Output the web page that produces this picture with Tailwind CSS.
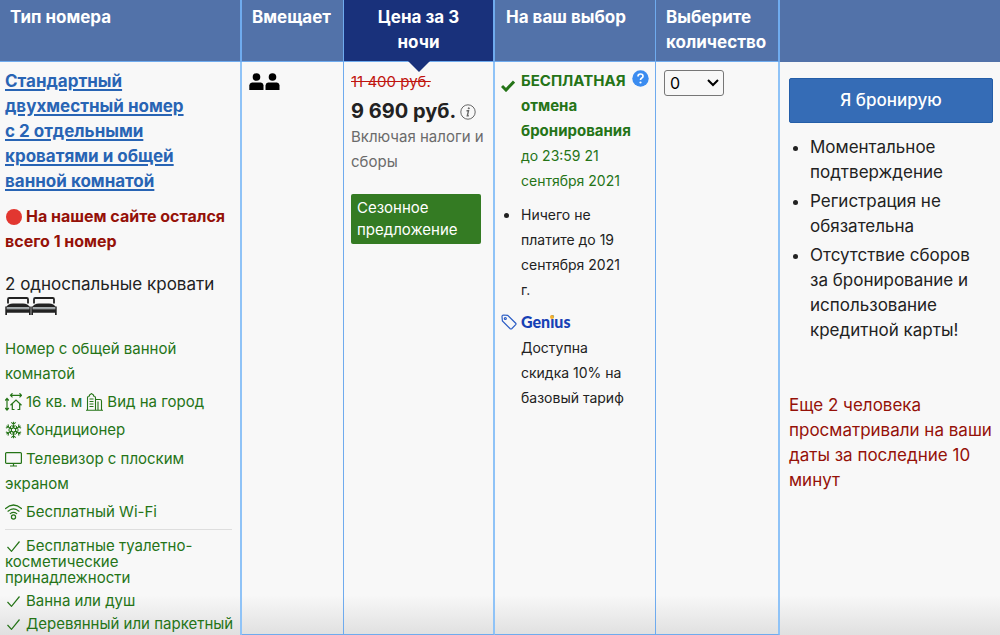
<!DOCTYPE html>
<html lang="ru">
<head>
<meta charset="utf-8">
<title>Выбор номера</title>
<script src="https://cdn.jsdelivr.net/npm/@tailwindcss/browser@4"></script>
</head>
<body class="bg-[#f8f8f8] font-['Inter',sans-serif] text-[#222]">
<div class="h-screen overflow-hidden bg-[linear-gradient(to_top,#e0e0e0,#f8f8f8_40px)]">
<table class="h-full w-full table-fixed border-separate border-spacing-0">
  <colgroup>
    <col class="w-[24.2%]"><col class="w-[10.2%]"><col class="w-[15.1%]"><col class="w-[16.1%]"><col class="w-[12.4%]"><col class="w-[22%]">
  </colgroup>
  <thead>
    <tr class="h-[62px] bg-[#5272a9] text-left align-top text-[17px] leading-[25px] text-white">
      <th class="border-r-2 border-b border-[#6fabee] pt-[5px] pl-[10px] font-bold">Тип номера</th>
      <th class="border-r border-b border-[#6fabee] pt-[5px] pl-[10px] font-bold">Вмещает</th>
      <th class="relative border-r-2 border-b border-[#6fabee] bg-[#19317b] px-6 pt-[5px] text-center font-bold">Цена за 3 ночи
        <svg class="absolute top-full left-1/2 -ml-[11px]" width="22" height="11" viewBox="0 0 22 11"><path d="M0 0h22L11 11z" fill="#19317b"/></svg>
      </th>
      <th class="border-r border-b border-[#6fabee] pt-[5px] pl-[11px] font-bold">На ваш выбор</th>
      <th class="border-r-2 border-b border-[#6fabee] pt-[5px] pl-[10px] font-bold">Выберите количество</th>
      <th class="pt-[5px]"></th>
    </tr>
  </thead>
  <tbody>
    <tr class="align-top">
      <td class="border-r-2 border-[#8fc3f7] pt-[7px] pr-2 pl-[5px]">
        <a href="#" class="block text-[17px] leading-[25px] font-bold whitespace-nowrap text-[#2864b4] underline decoration-2 underline-offset-2">Стандартный<br>двухместный номер<br>с 2 отдельными<br>кроватями и общей<br>ванной комнатой</a>
        <p class="mt-[10px] text-base leading-[25px] font-bold whitespace-nowrap text-[#951108]"><span class="mr-1 ml-px inline-block size-4 rounded-full bg-[#e23730] align-[-3px]"></span>На нашем сайте остался<br>всего 1 номер</p>
        <p class="mt-[18px] text-[17px] leading-[25px] whitespace-nowrap">2 односпальные кровати</p>
        <div class="flex h-[18px]">
          <svg width="26" height="18" viewBox="0 0 26 18"><path d="M3 6.500V2.200Q3 1 4.200 1h17.600Q23 1 23 2.200v4.300" fill="none" stroke="#222" stroke-width="1.800"/><path d="M1 10.300Q3 6.500 8 6.500h10q5 0 7 3.800z" fill="#222"/><path d="M1.500 10.300h23v2h-23z" fill="#9ba2a5"/><path d="M.3 9.500h1.400v2.800h22.600V9.500h1.400V18H24v-2.300H2V18H.3z" fill="#222"/></svg>
          <svg width="26" height="18" viewBox="0 0 26 18"><path d="M3 6.500V2.200Q3 1 4.200 1h17.600Q23 1 23 2.200v4.300" fill="none" stroke="#222" stroke-width="1.800"/><path d="M1 10.300Q3 6.500 8 6.500h10q5 0 7 3.800z" fill="#222"/><path d="M1.500 10.300h23v2h-23z" fill="#9ba2a5"/><path d="M.3 9.500h1.400v2.800h22.600V9.500h1.400V18H24v-2.300H2V18H.3z" fill="#222"/></svg>
        </div>
        <div class="mt-[21px] text-[15px] leading-[25px] whitespace-nowrap text-[#257417]">
          <p>Номер с общей ванной<br>комнатой</p>
          <p class="mt-[3px] flex items-center gap-1">
            <svg width="17" height="18" viewBox="0 0 17 18" fill="none" stroke="#257417" stroke-width="1.200"><path d="M5.500 2.300h11M7.500.3l-2 2 2 2M14.500.3l2 2-2 2M2 5.500v11.500M.2 7.500L2 5.500l1.800 2M.2 15L2 17l1.800-2M5.500 12.200L11 7l5.500 5.200M7.300 11v5.500h2.200M14.700 11v5.500h-2.200"/></svg>
            <span>16 кв. м</span>
            <svg width="17" height="18" viewBox="0 0 17 18" fill="none" stroke="#257417" stroke-width="1.100"><path d="M1.500 17V5Q1.500 3 3.500 3V2L5.500.6l2 1.400v1q2 0 2 2v12M12 17V8.500M9.500 6.500h4.500q1.500 0 1.500 1.500v9M0 17.300h17M3.500 6h4M3.500 8.500h4M3.500 11h4M3.500 13.500h4"/></svg>
            <span>Вид на город</span>
          </p>
          <p class="mt-[3px] flex items-center gap-1">
            <svg width="17" height="18" viewBox="-9 -9 18 18" fill="none" stroke="#257417" stroke-width="1.100"><path id="arm" d="M0-2.500v-6.200M-2.300-8L0-6 2.300-8M-2.200-1.300L0-2.500 2.200-1.300M-2.200-4.800L0-3.600 2.200-4.800"/><use href="#arm" transform="rotate(60)"/><use href="#arm" transform="rotate(120)"/><use href="#arm" transform="rotate(180)"/><use href="#arm" transform="rotate(240)"/><use href="#arm" transform="rotate(300)"/></svg>
            <span>Кондиционер</span>
          </p>
          <p class="mt-1"><svg class="mr-1 inline-block align-[-3px]" width="17" height="16" viewBox="0 0 17 16" fill="none" stroke="#257417" stroke-width="1.200"><rect x=".6" y="1.600" width="15.800" height="10.800" rx="1"/><path d="M8.500 12.500V15M5 15h7"/></svg>Телевизор с плоским<br>экраном</p>
          <p class="mt-[3px] flex items-center gap-1">
            <svg width="17" height="16" viewBox="0 0 17 16" fill="none" stroke="#257417" stroke-width="1.200" stroke-linecap="round"><path d="M.6 4.500Q8.500-2.500 16.400 4.500M3 7.200q5.500-4.800 11 0M5.300 9.600q3.200-2.600 6.400 0"/><circle cx="8.500" cy="13" r="2.100"/></svg>
            <span>Бесплатный Wi-Fi</span>
          </p>
          <div class="mt-[5px] border-t border-[#dedede]"></div>
          <ul class="mt-2 leading-4">
            <li><svg class="mr-[6px] ml-[2px] inline-block" width="13" height="11" viewBox="0 0 13 11" fill="none" stroke="#257417" stroke-width="1.200"><path d="M.5 6l4 4.300L12.500.5"/></svg>Бесплатные туалетно-<br>косметические<br>принадлежности</li>
            <li class="mt-[7px]"><svg class="mr-[6px] ml-[2px] inline-block" width="13" height="11" viewBox="0 0 13 11" fill="none" stroke="#257417" stroke-width="1.200"><path d="M.5 6l4 4.300L12.500.5"/></svg>Ванна или душ</li>
            <li class="mt-[7px]"><svg class="mr-[6px] ml-[2px] inline-block" width="13" height="11" viewBox="0 0 13 11" fill="none" stroke="#257417" stroke-width="1.200"><path d="M.5 6l4 4.300L12.500.5"/></svg>Деревянный или паркетный</li>
          </ul>
        </div>
      </td>
      <td class="border-r border-b border-[#6fabee] pt-[11px] pl-[7px]">
        <svg width="31" height="17" viewBox="0 0 31 17" role="img" aria-label="2 гостя"><circle cx="7.500" cy="4" r="3.800"/><path d="M.3 17v-4.500Q.3 10 3 9.500h9q2.500.5 2.500 3V17z"/><circle cx="23.500" cy="4" r="3.800"/><path d="M16.500 17v-4.500q0-2.500 2.500-3h9q2.500.5 2.500 3V17z"/></svg>
      </td>
      <td class="border-r-2 border-b border-r-[#8fc3f7] border-b-[#6fabee] pt-[7px] pr-3 pl-[7px]">
        <p class="text-[15px] leading-[25px] text-[#c0150f] line-through">11 400 руб.</p>
        <p class="mt-[5px] flex items-center gap-1 text-xl leading-[25px] font-bold whitespace-nowrap">9 690 руб.
          <svg width="16" height="16" viewBox="0 0 16 16" fill="none" stroke="#666"><circle cx="8" cy="8" r="7.200"/><path d="M6.500 6.800h2l-1.200 5h1.500" stroke-width="1.400"/><circle cx="8.800" cy="4.300" r=".6" fill="#666"/></svg>
        </p>
        <p class="text-[15px] leading-[25px] whitespace-nowrap text-[#6b6b6b]">Включая налоги и<br>сборы</p>
        <p class="mt-5 rounded-[2px] bg-[#347b23] px-[6px] py-[3px] text-[15px] leading-[22px] text-white">Сезонное<br>предложение</p>
      </td>
      <td class="border-r border-b border-[#6fabee] px-[6px] pt-[6px] text-sm leading-[25px]">
        <div class="flex text-[#257417]">
          <svg class="mt-3 mr-[6px] shrink-0" width="14" height="12" viewBox="0 0 14 12" fill="none" stroke="#257417" stroke-width="3"><path d="M1 6l4 4L13 1.500"/></svg>
          <p class="whitespace-nowrap"><b class="text-[15px]">БЕСПЛАТНАЯ<br>отмена<br>бронирования</b><br>до 23:59 21<br>сентября 2021</p>
          <svg class="mt-[2px] ml-auto shrink-0" width="17" height="17" viewBox="0 0 17 17"><circle cx="8.500" cy="8.500" r="8.200" fill="#3b8cf0"/><path d="M6 6.500q0-2.500 2.500-2.500T11 6.200q0 1.200-1.300 1.900-1.200.7-1.200 2" fill="none" stroke="#fff" stroke-width="1.700"/><circle cx="8.500" cy="12.500" r="1.100" fill="#fff"/></svg>
        </div>
        <ul class="mt-[9px] list-disc pl-[19px]"><li class="pl-px">Ничего не<br>платите до 19<br>сентября 2021<br>г.</li></ul>
        <div class="mt-[10px] flex items-center gap-1 font-['Lato',sans-serif] text-base font-black text-[#1741b5]">
          <svg width="16" height="16" viewBox="0 0 16 16" fill="none" stroke="#2a5cc4" stroke-width="1.200"><path d="M1 2.500Q1 1 2.500 1l4.200.4 8 7.800q.6.800 0 1.500l-4 4q-.8.600-1.500 0L1.400 7z"/><circle cx="4.300" cy="4.500" r="1"/></svg>
          <span class="leading-[19px]">Gen<span class="relative inline-block">i<span class="absolute top-[3px] left-0 size-1 rounded-full bg-[#f5b12b]"></span></span>us</span>
        </div>
        <p class="mt-1 pl-5">Доступна<br>скидка 10% на<br>базовый тариф</p>
      </td>
      <td class="border-r-2 border-b border-r-[#8fc3f7] border-b-[#6fabee] pt-2 pl-2">
        <div class="relative w-[60px]">
          <select aria-label="Количество номеров" class="h-[26px] w-full appearance-none rounded-[3px] border border-[#777] bg-[#f8f8f8] pl-[5px] text-base leading-6 text-black"><option>0</option><option>1</option></select>
          <svg class="pointer-events-none absolute top-[9px] right-[5px]" width="12" height="8" viewBox="0 0 12 8" fill="none" stroke="#000" stroke-width="2"><path d="M1 1l5 5 5-5"/></svg>
        </div>
      </td>
      <td class="pt-4 pr-[7px] pl-[9px] text-[17px] leading-[25px]">
        <button class="h-[45px] w-full rounded-[2px] border border-[#245ea8] bg-[#356cb6] font-medium text-white">Я бронирую</button>
        <ul class="mt-3 list-disc space-y-1 pl-[21px] whitespace-nowrap">
          <li>Моментальное<br>подтверждение</li>
          <li>Регистрация не<br>обязательна</li>
          <li>Отсутствие сборов<br>за бронирование и<br>использование<br>кредитной карты!</li>
        </ul>
        <p class="mt-[50px] whitespace-nowrap text-[#951108]">Еще 2 человека<br>просматривали на ваши<br>даты за последние 10<br>минут</p>
      </td>
    </tr>
  </tbody>
</table>
</div>
</body>
</html>
